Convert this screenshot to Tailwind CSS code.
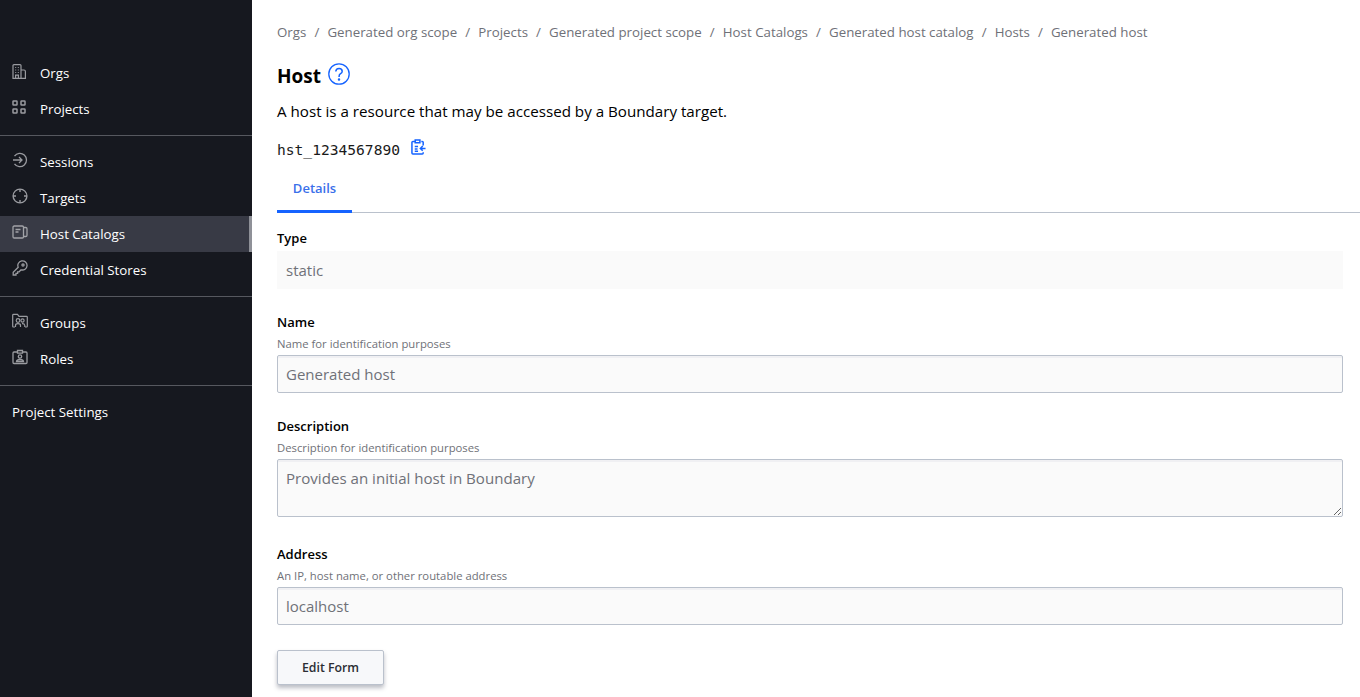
<!DOCTYPE html>
<html lang="en">
<head>
    <meta charset="UTF-8">
    <title>Host</title>
    <script src="https://cdn.jsdelivr.net/npm/@tailwindcss/browser@4"></script>
</head>
<body class="h-[697px] overflow-hidden bg-white flex font-['Open_Sans',sans-serif] text-black">
    <!-- Sidebar -->
    <aside class="w-[252px] shrink-0 bg-[#16181f] pt-[55px] text-[13.3px] text-white">
        <nav class="pb-2 border-b border-[#56585f]">
            <a class="h-9 flex items-center gap-[14px] pl-[12px] pr-3">
                <svg class="w-[14px] h-[15px] -mt-[4px]" viewBox="0 0 14 15" fill="none" stroke="#9a9ba0" stroke-width="1.2"><path d="M1 14.4V1.6q0-1 1-1h6q1 0 1 1v12.8zM9 6h3q1.4 0 1.4 1.4v7H9M1 14.4h12M3.2 3.5h1M5.8 3.5h1M3.2 6h1M5.8 6h1M3.2 8.5h1M5.8 8.5h1M3.6 14.4v-3.2h2.8v3.2"/></svg>
                <span class="mt-[2px]">Orgs</span>
            </a>
            <a class="h-9 flex items-center gap-[14px] px-3">
                <svg class="w-[14px] h-[14px] -mt-[5px]" viewBox="0 0 14 14" fill="none" stroke="#9a9ba0" stroke-width="1.5"><rect x="1" y="1" width="4" height="4" rx=".6"/><rect x="9" y="1" width="4" height="4" rx=".6"/><rect x="1" y="9" width="4" height="4" rx=".6"/><rect x="9" y="9" width="4" height="4" rx=".6"/></svg>
                <span class="mt-[2px]">Projects</span>
            </a>
        </nav>
        <nav class="py-2 border-b border-[#56585f]">
            <a class="h-9 flex items-center gap-3 px-3">
                <svg class="w-4 h-4 -mt-[4px]" viewBox="0 0 16 16" fill="none" stroke="#9a9ba0" stroke-width="1.3"><path d="M2.5 4.2A6.6 6.6 0 1 1 2.5 11.8M1 8h9M7 5l3 3-3 3"/></svg>
                <span class="mt-[2px]">Sessions</span>
            </a>
            <a class="h-9 flex items-center gap-3 px-3">
                <svg class="w-4 h-4 -mt-[4px]" viewBox="0 0 16 16" fill="none" stroke="#9a9ba0" stroke-width="1.4"><circle cx="8" cy="8" r="6.9"/><path d="M8 1v3M8 12v3M1 8h3M12 8h3"/></svg>
                <span class="mt-[2px]">Targets</span>
            </a>
            <a class="relative h-9 flex items-center gap-3 px-3 bg-[#383a45]">
                <svg class="w-4 h-4 -mt-[4px]" viewBox="0 0 16 16" fill="none" stroke="#a2a3a8" stroke-width="1.3"><rect x="1" y="2" width="10.5" height="12" rx="1.2"/><path d="M3.5 5.5h5M3.5 8h3M11.5 3.5h2.2q1.3 0 1.3 1.3v6.4q0 1.3-1.3 1.3h-2.2"/></svg>
                <span class="mt-[2px]">Host Catalogs</span>
                <span class="absolute right-0 top-0 w-[3px] h-9 bg-[#8f9198]"></span>
            </a>
            <a class="h-9 flex items-center gap-3 px-3">
                <svg class="w-4 h-4 -mt-[4px]" viewBox="0 0 16 16" fill="none" stroke="#9a9ba0" stroke-width="1.3"><path d="M6.2 7.2 1.2 12.2V15H4v-1.6h1.6v-1.6h1.5l2-2A4.6 4.6 0 1 0 6.2 7.2z"/><circle cx="11" cy="5" r="1.1"/></svg>
                <span class="mt-[2px]">Credential Stores</span>
            </a>
        </nav>
        <nav class="py-2 border-b border-[#56585f]">
            <a class="h-9 flex items-center gap-3 px-3">
                <svg class="w-4 h-4 -mt-[4px]" viewBox="0 0 16 16" fill="none" stroke="#9a9ba0" stroke-width="1.2"><path d="M3 14H1.5q-.8 0-.8-.8V2.2q0-.8.8-.8h4l1.5 2h7.5q.8 0 .8.8v9q0 .8-.8.8H13"/><circle cx="6" cy="7.5" r="1.8"/><circle cx="10.5" cy="7.5" r="1.6"/><path d="M3.5 14v-1.5q0-1.8 2.5-1.8t2.5 1.8V14M10 10.6q2.5-.2 2.8 1.9V14"/></svg>
                <span class="mt-[2px]">Groups</span>
            </a>
            <a class="h-9 flex items-center gap-3 px-3">
                <svg class="w-4 h-4 -mt-[4px]" viewBox="0 0 16 16" fill="none" stroke="#9a9ba0" stroke-width="1.3"><path d="M5.5 3H2q-1 0-1 1v9.5q0 1 1 1h12q1 0 1-1V4q0-1-1-1h-3.5M5.5 4.2V1.5h5v2.7z"/><circle cx="8" cy="7.5" r="1.7"/><path d="M4.5 12.5q.2-2 3.5-2t3.5 2z"/></svg>
                <span class="mt-[2px]">Roles</span>
            </a>
        </nav>
        <nav class="py-2">
            <a class="h-9 flex items-center px-3"><span class="mt-[2px]">Project Settings</span></a>
        </nav>
    </aside>

    <!-- Main -->
    <main class="flex-1 min-w-0 pt-[24px]">
        <div class="pl-[25px] pr-[17px]">
            <ol class="flex items-center gap-[8.1px] h-[18px] text-[13.3px] text-[#6f7178]">
                <li>Orgs</li><li>/</li>
                <li>Generated org scope</li><li>/</li>
                <li>Projects</li><li>/</li>
                <li>Generated project scope</li><li>/</li>
                <li>Host Catalogs</li><li>/</li>
                <li>Generated host catalog</li><li>/</li>
                <li>Hosts</li><li>/</li>
                <li>Generated host</li>
            </ol>
            <div class="flex items-center gap-[7px] mt-[20px] h-7">
                <h1 class="text-[19px] font-bold leading-7">Host</h1>
                <svg class="w-[22px] h-[22px] -mt-1" viewBox="0 0 22 22" fill="none" stroke="#1563ff" stroke-width="1.3"><circle cx="11" cy="11" r="10.2"/><path d="M7.8 8.6q.1-3.2 3.3-3.2 3.1 0 3.1 2.8 0 1.6-1.6 2.5-1.5.9-1.5 2.6v.6" stroke-width="1.5"/><circle cx="11" cy="16.6" r=".6" fill="#1563ff"/></svg>
            </div>
            <p class="mt-[11px] text-[15.17px] leading-5">A host is a resource that may be accessed by a Boundary target.</p>
            <div class="flex items-center gap-[11px] mt-[20px] h-5">
                <code class="-mt-[2px] text-[14.6px] font-['DejaVu_Sans_Mono',monospace] text-[#1a1a1a]">hst_1234567890</code>
                <svg class="w-[15px] h-[16px] -mt-2" viewBox="0 0 16 17" fill="none" stroke="#1563ff" stroke-width="1.6"><path d="M4.5 2.5H2q-1 0-1 1v11.5q0 1 1 1h10q1 0 1-1V14M11 2.5h1q1 0 1 1V7M4.5 1h5v3h-5zM4 8h3.5M4 10.5h3M4 13h3.5M15.5 10H10M12.5 7.5 10 10l2.5 2.5"/></svg>
            </div>
        </div>

        <div class="mt-[5px] ml-[25px] border-b border-[#bac1cc]">
            <div class="w-[75px] h-[47px] -mb-px border-b-[3px] border-[#1563ff] flex items-center justify-center pt-[2px] text-[13px] font-semibold text-[#3a70ea]">Details</div>
        </div>

        <form class="pl-[25px] pr-[17px] pt-[17px]">
            <label class="block h-[20px] text-[13px] font-semibold leading-[16px]">Type</label>
            <div class="h-[38px] mt-px px-[9px] bg-[#fafafa] flex items-center text-[15px] text-[#6f7178]">static</div>

            <label class="block h-[20px] mt-[23px] text-[13px] font-semibold leading-[20px]">Name</label>
            <p class="h-[13px] mt-[5px] text-[11.3px] leading-[13px] text-[#6f7178]">Name for identification purposes</p>
            <input class="block w-full h-[38px] mt-[5px] px-[8px] bg-[#fafafa] border border-[#bac1cc] rounded-[2px] shadow-[inset_0_2px_0_#f0f0f3] text-[15px] text-[#6f7178]" value="Generated host">

            <label class="block h-[20px] mt-[23px] text-[13px] font-semibold leading-[20px]">Description</label>
            <p class="h-[13px] mt-[5px] text-[11.3px] leading-[13px] text-[#6f7178]">Description for identification purposes</p>
            <textarea class="block w-full h-[58px] mt-[5px] px-[8px] py-[8px] bg-[#fafafa] border border-[#bac1cc] rounded-[2px] shadow-[inset_0_2px_0_#f0f0f3] text-[15.1px] leading-5 text-[#6f7178]">Provides an initial host in Boundary</textarea>

            <label class="block h-[20px] mt-[27px] text-[13px] font-semibold leading-[20px]">Address</label>
            <p class="h-[13px] mt-[5px] text-[11.3px] leading-[13px] text-[#6f7178]">An IP, host name, or other routable address</p>
            <input class="block w-full h-[38px] mt-[5px] px-[8px] bg-[#fafafa] border border-[#bac1cc] rounded-[2px] shadow-[inset_0_2px_0_#f0f0f3] text-[15px] text-[#6f7178]" value="localhost">

            <button type="button" class="block w-[107px] h-[35px] mt-[25px] pt-[2px] bg-[#f7f8fa] border border-[#bac1cc] rounded-[2px] shadow-[0_3px_4px_rgba(60,65,85,0.35)] text-[12.3px] font-semibold text-[#2b2d33]">Edit Form</button>
        </form>
    </main>
</body>
</html>
